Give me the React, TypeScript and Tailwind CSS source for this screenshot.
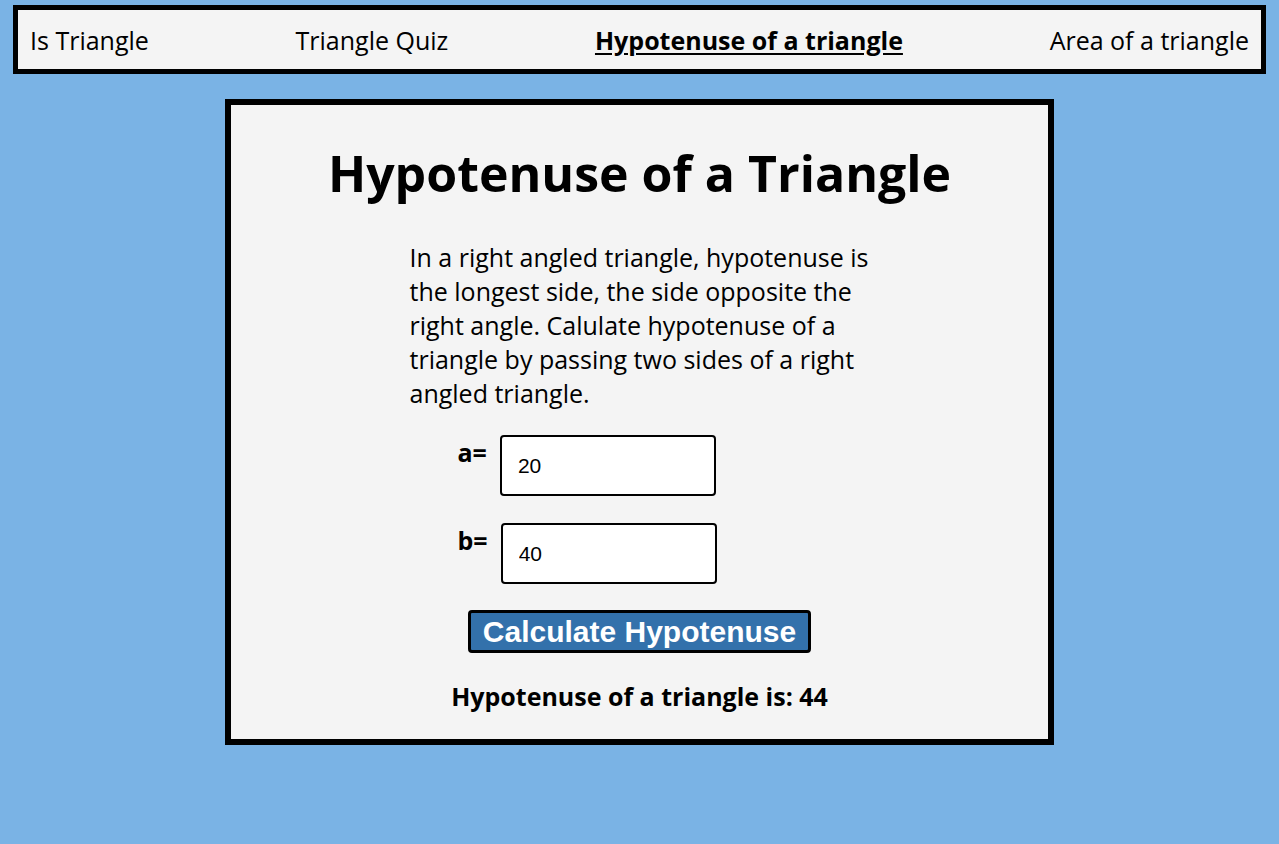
import { useState } from 'react';

export default function App() {
  const [a, setA] = useState('20');
  const [b, setB] = useState('40');
  const result = Math.trunc(Math.sqrt(Number(a) ** 2 + Number(b) ** 2));

  const links = ['Is Triangle', 'Triangle Quiz', 'Hypotenuse of a triangle', 'Area of a triangle'];

  return (
    <div className="min-h-[844px] bg-[#7ab3e5] pt-[5px] font-['Open_Sans',sans-serif] text-black">
      {/* Nav */}
      <nav className="mx-[13px] flex h-[69px] items-center justify-between border-[5px] border-black bg-[#f4f4f4] px-[12px] pt-[2px] text-[25px]">
        {links.map((l) => (
          <a
            key={l}
            href="#"
            className={l === 'Hypotenuse of a triangle' ? 'font-bold underline underline-offset-[3px]' : ''}
          >
            {l}
          </a>
        ))}
      </nav>

      {/* Card */}
      <main className="mx-auto mt-[25px] flex w-[829px] flex-col items-center border-[6px] border-black bg-[#f4f4f4] pt-[34px] pb-[26px]">
        <h1 className="text-[50px] font-bold leading-[68px]">Hypotenuse of a Triangle</h1>

        <p className="mt-[33px] w-[460px] text-[25px] leading-[34px]">
          In a right angled triangle, hypotenuse is the longest side, the side opposite the right angle. Calulate
          hypotenuse of a triangle by passing two sides of a right angled triangle.
        </p>

        <div className="mt-[25px] flex w-[460px] flex-col gap-[27px] pl-[48px]">
          <label className="flex items-start gap-[13px]">
            <span className="text-[25px] font-bold leading-[34px]">a=</span>
            <input
              value={a}
              onChange={(e) => setA(e.target.value)}
              className="h-[61px] w-[216px] rounded-[4px] border-2 border-black bg-white px-[16px] font-['Liberation_Sans',sans-serif] text-[21px] outline-none"
            />
          </label>
          <label className="flex items-start gap-[13px]">
            <span className="text-[25px] font-bold leading-[34px]">b=</span>
            <input
              value={b}
              onChange={(e) => setB(e.target.value)}
              className="h-[61px] w-[216px] rounded-[4px] border-2 border-black bg-white px-[16px] font-['Liberation_Sans',sans-serif] text-[21px] outline-none"
            />
          </label>
        </div>

        <button className="mt-[26px] h-[43px] rounded-[4px] border-[3px] border-black bg-[#3371ab] px-[12px] font-['Liberation_Sans',sans-serif] text-[30px] font-bold leading-none text-white">
          Calculate Hypotenuse
        </button>

        <p className="mt-[26px] text-[25px] font-bold leading-[34px]">Hypotenuse of a triangle is: {result}</p>
      </main>
    </div>
  );
}
